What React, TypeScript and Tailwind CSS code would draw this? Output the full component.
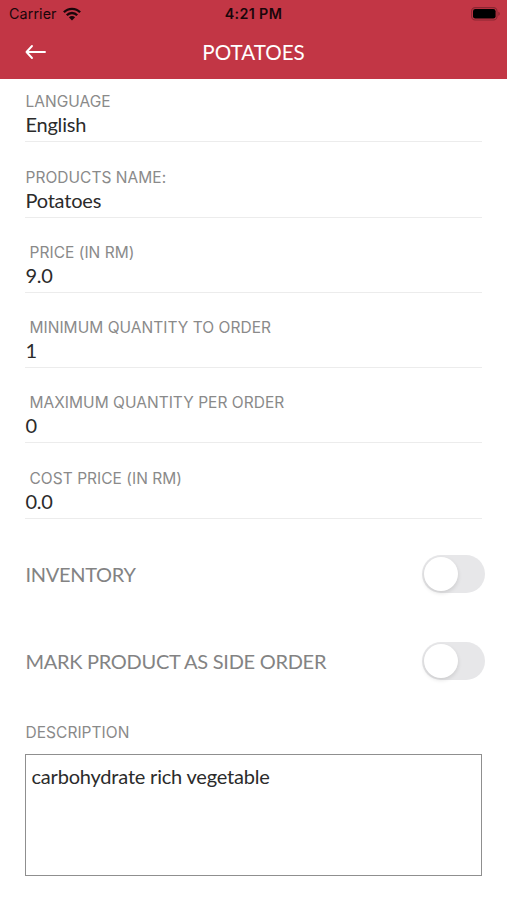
import { useState } from 'react'

type FieldProps = {
  label: string
  value: string
  indent?: boolean
}

type ToggleRowProps = {
  label: string
  className: string
}

const fields: FieldProps[] = [
  { label: 'LANGUAGE', value: 'English' },
  { label: 'PRODUCTS NAME:', value: 'Potatoes' },
  { label: 'PRICE (IN RM)', value: '9.0', indent: true },
  { label: 'MINIMUM QUANTITY TO ORDER', value: '1', indent: true },
  { label: 'MAXIMUM QUANTITY PER ORDER', value: '0', indent: true },
  { label: 'COST PRICE (IN RM)', value: '0.0', indent: true },
]

const WifiIcon = () => (
  <svg width="18" height="14" viewBox="0 0 18 14" fill="none" stroke="#19060a" strokeWidth="2.3">
    <path d="M0.9 5.3C5.2 0.6 12.8 0.6 17.1 5.3" />
    <path d="M3.8 8.3C6.6 5.2 11.4 5.2 14.2 8.3" />
    <path d="M9 13.4L5.9 10.2C7.6 8.5 10.4 8.5 12.1 10.2Z" fill="#19060a" stroke="none" />
  </svg>
)

const BatteryIcon = () => (
  <svg width="30" height="14" viewBox="0 0 30 14">
    <rect x="0.6" y="0.6" width="25.4" height="12.4" rx="3.6" fill="none" stroke="#8a2632" strokeWidth="1.1" />
    <rect x="2" y="2" width="22.6" height="9.6" rx="2.3" fill="#000" />
    <path d="M27.3 4.7C29.3 5.4 29.3 8.2 27.3 8.9Z" fill="#8a2632" />
  </svg>
)

const BackIcon = () => (
  <svg width="22" height="16" viewBox="0 0 22 16" fill="none" stroke="#fff" strokeWidth="1.9" strokeLinecap="round" strokeLinejoin="round">
    <path d="M20 8H1.5M7 2L1.5 8L7 14" />
  </svg>
)

const Header = () => (
  <header className="h-[79px] bg-[#c23645]">
    <div className="grid h-[27px] grid-cols-3 items-center px-[7px] font-['Inter',sans-serif] text-[#19060a]">
      <div className="flex items-center gap-[6px] pl-[2px]">
        <span className="text-[14.3px] tracking-[0.1px]">Carrier</span>
        <WifiIcon />
      </div>
      <span className="text-center text-[14.3px] font-semibold tracking-[0.35px]">4:21 PM</span>
      <div className="-mr-[1px] flex justify-end">
        <BatteryIcon />
      </div>
    </div>
    <div className="grid h-[50px] grid-cols-[48px_1fr_48px] items-center">
      <button type="button" aria-label="Back" className="pl-[25px]">
        <BackIcon />
      </button>
      <h1 className="text-center text-[20.6px] text-white">POTATOES</h1>
    </div>
  </header>
)

const Field = ({ label, value, indent }: FieldProps) => (
  <div className="flex h-[75.3px] flex-col justify-end border-b border-[#ececec] pb-[5px]">
    <span className={`font-['Inter',sans-serif] text-[15.5px] leading-[22px] tracking-[0.03px] text-[#8a8a8a] ${indent ? 'pl-[4.5px]' : 'pl-[0.5px]'}`}>
      {label}
    </span>
    <span className="pl-[0.4px] text-[20px] leading-[23px] tracking-[-0.2px] text-[#2b2b2b]">{value}</span>
  </div>
)

const ToggleRow = ({ label, className }: ToggleRowProps) => {
  const [on, setOn] = useState(false)

  return (
    <div className={`flex h-[38px] items-center justify-between ${className}`}>
      <span className="pb-[1.5px] pl-[0.4px] text-[20px] tracking-[-0.28px] text-[#838383]">{label}</span>
      <button
        type="button"
        role="switch"
        aria-checked={on}
        aria-label={label}
        onClick={() => setOn(!on)}
        className={`-mr-[3px] flex h-[38px] w-[63px] items-center rounded-full p-[2px] ${on ? 'justify-end bg-green-500' : 'bg-[#e7e7e9]'}`}
      >
        <span className="h-[34px] w-[34px] rounded-full bg-white shadow-[0_2px_4px_rgba(0,0,0,0.12)]" />
      </button>
    </div>
  )
}

const App = () => (
  <div className="h-[900px] w-full overflow-hidden bg-white font-['Lato',sans-serif]">
    <Header />
    <main className="-mt-[12px] px-[25px]">
      {fields.map((field) => (
        <Field key={field.label} {...field} />
      ))}
      <ToggleRow label="INVENTORY" className="mt-[36.7px]" />
      <ToggleRow label="MARK PRODUCT AS SIDE ORDER" className="mt-[49px]" />
      <p className="mt-[41.3px] pl-[0.5px] font-['Inter',sans-serif] text-[15.5px] leading-[22px] tracking-[0.03px] text-[#8a8a8a]">DESCRIPTION</p>
      <div className="mt-[10px] h-[122px] border border-[#8f8f8f] px-[5.5px] py-[9px] text-[20px] leading-[25px] tracking-[-0.2px] text-[#2b2b2b]">
        carbohydrate rich vegetable
      </div>
    </main>
  </div>
)

export default App
